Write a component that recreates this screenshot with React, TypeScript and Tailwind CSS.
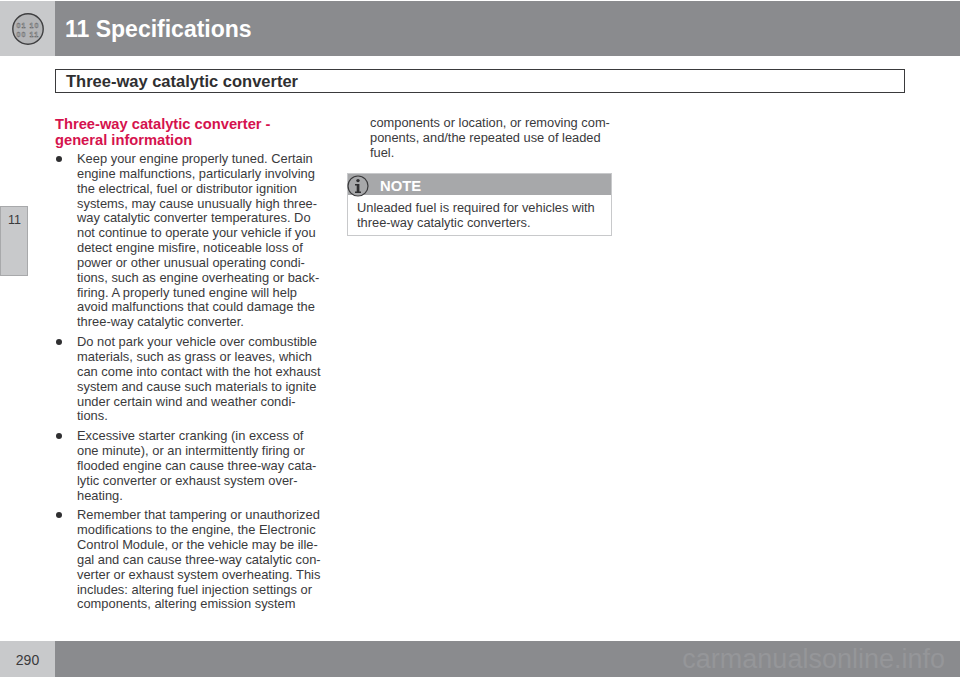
const bullets: string[][] = [
  [
    "Keep your engine properly tuned. Certain",
    "engine malfunctions, particularly involving",
    "the electrical, fuel or distributor ignition",
    "systems, may cause unusually high three-",
    "way catalytic converter temperatures. Do",
    "not continue to operate your vehicle if you",
    "detect engine misfire, noticeable loss of",
    "power or other unusual operating condi-",
    "tions, such as engine overheating or back-",
    "firing. A properly tuned engine will help",
    "avoid malfunctions that could damage the",
    "three-way catalytic converter.",
  ],
  [
    "Do not park your vehicle over combustible",
    "materials, such as grass or leaves, which",
    "can come into contact with the hot exhaust",
    "system and cause such materials to ignite",
    "under certain wind and weather condi-",
    "tions.",
  ],
  [
    "Excessive starter cranking (in excess of",
    "one minute), or an intermittently firing or",
    "flooded engine can cause three-way cata-",
    "lytic converter or exhaust system over-",
    "heating.",
  ],
  [
    "Remember that tampering or unauthorized",
    "modifications to the engine, the Electronic",
    "Control Module, or the vehicle may be ille-",
    "gal and can cause three-way catalytic con-",
    "verter or exhaust system overheating. This",
    "includes: altering fuel injection settings or",
    "components, altering emission system",
  ],
];

function Lines({ lines }: { lines: string[] }) {
  return (
    <>
      {lines.map((l) => (
        <div key={l} className="whitespace-nowrap">
          {l}
        </div>
      ))}
    </>
  );
}

const digit = {
  fontSize: 7,
  letterSpacing: 1.2,
  textAnchor: "middle" as const,
  fill: "#d2d3d5",
  stroke: "#5c5c5e",
  strokeWidth: 0.45,
  fontFamily: "Liberation Sans",
  fontWeight: 700,
};

export default function App() {
  return (
    <div className="flex h-[678px] w-[960px] flex-col overflow-hidden bg-white font-['Liberation_Sans',Arial,sans-serif] text-[#3a3a3c]">
      <header className="mt-px flex h-[55px] shrink-0">
        <div className="flex w-[55px] items-center justify-center bg-[#c8c9cb]">
          <svg width="32" height="32" viewBox="0 0 32 32">
            <circle cx="16" cy="16" r="15.2" fill="#b4b5b7" stroke="#3f3f41" strokeWidth="1.4" />
            <text x="9.5" y="14.8" {...digit}>01</text>
            <text x="22.5" y="14.8" {...digit}>10</text>
            <text x="9.5" y="23.8" {...digit}>00</text>
            <text x="22.5" y="23.8" {...digit}>11</text>
          </svg>
        </div>
        <div className="flex flex-1 items-center bg-[#8a8b8e] pt-[2px] pl-[10px] text-[23px] font-bold text-white">
          11 Specifications
        </div>
      </header>

      <div className="flex min-h-0 flex-1">
        <aside className="w-[55px] shrink-0 pt-[150px]">
          <div className="h-[70px] w-[28px] border border-[#a8a9ab] bg-[#c8c9cb] pt-[5px] pr-[6px] text-right text-[12.5px] leading-[16px]">
            11
          </div>
        </aside>

        <main className="min-w-0 flex-1 pt-[13px]">
          <div className="h-[24px] w-[850px] border border-[#3a3a3c] pl-[10px] text-[16.5px] leading-[22px] font-bold text-[#2f2f31]">
            Three-way catalytic converter
          </div>

          <div className="flex pt-[23px]">
            <div className="w-[265px] shrink-0 text-[12.9px] leading-[14.85px]">
              <h2 className="mb-[4px] text-[14.7px] leading-[16px] font-bold text-[#d5124e]">
                Three-way catalytic converter -<br />
                general information
              </h2>
              {bullets.map((b, i) => (
                <div key={i} className="mb-[5px] flex">
                  <span className="mt-[4px] mr-[15px] ml-[1px] size-[6px] shrink-0 rounded-full bg-[#2f2f31]" />
                  <div>
                    <Lines lines={b} />
                  </div>
                </div>
              ))}
            </div>

            <div className="ml-[27px] w-[265px] shrink-0 text-[12.85px] leading-[14.85px]">
              <div className="pl-[23px]">
                <Lines
                  lines={[
                    "components or location, or removing com-",
                    "ponents, and/the repeated use of leaded",
                    "fuel.",
                  ]}
                />
              </div>
              <div className="relative mt-[12.5px] h-[63px] border border-[#c8c9cb]">
                <div className="h-[21px] bg-[#a7a8aa] pl-[32px] text-[14.8px] leading-[24px] font-bold text-white">
                  NOTE
                </div>
                <div className="px-[9px] pt-[6px]">
                  <Lines
                    lines={[
                      "Unleaded fuel is required for vehicles with",
                      "three-way catalytic converters.",
                    ]}
                  />
                </div>
                <svg className="absolute top-px left-[-1px]" width="22" height="22" viewBox="0 0 22 22">
                  <circle cx="11" cy="11" r="10" fill="#a7a8aa" stroke="#3a3a3c" strokeWidth="1.2" />
                  <circle cx="11" cy="5.6" r="1.7" fill="#2f2f31" />
                  <path d="M8 9h4.4v7.4H14V18H8v-1.6h1.7v-5.8H8z" fill="#2f2f31" />
                </svg>
              </div>
            </div>
          </div>
        </main>
      </div>

      <footer className="mb-px flex h-[36px] shrink-0">
        <div className="flex w-[55px] items-center justify-center bg-[#c8c9cb] pt-[2px] text-[14px]">290</div>
        <div className="flex flex-1 items-center justify-end bg-[#8a8b8e] pr-[15px] text-[27px] text-[#959699]">
          carmanualsonline.info
        </div>
      </footer>
    </div>
  );
}
